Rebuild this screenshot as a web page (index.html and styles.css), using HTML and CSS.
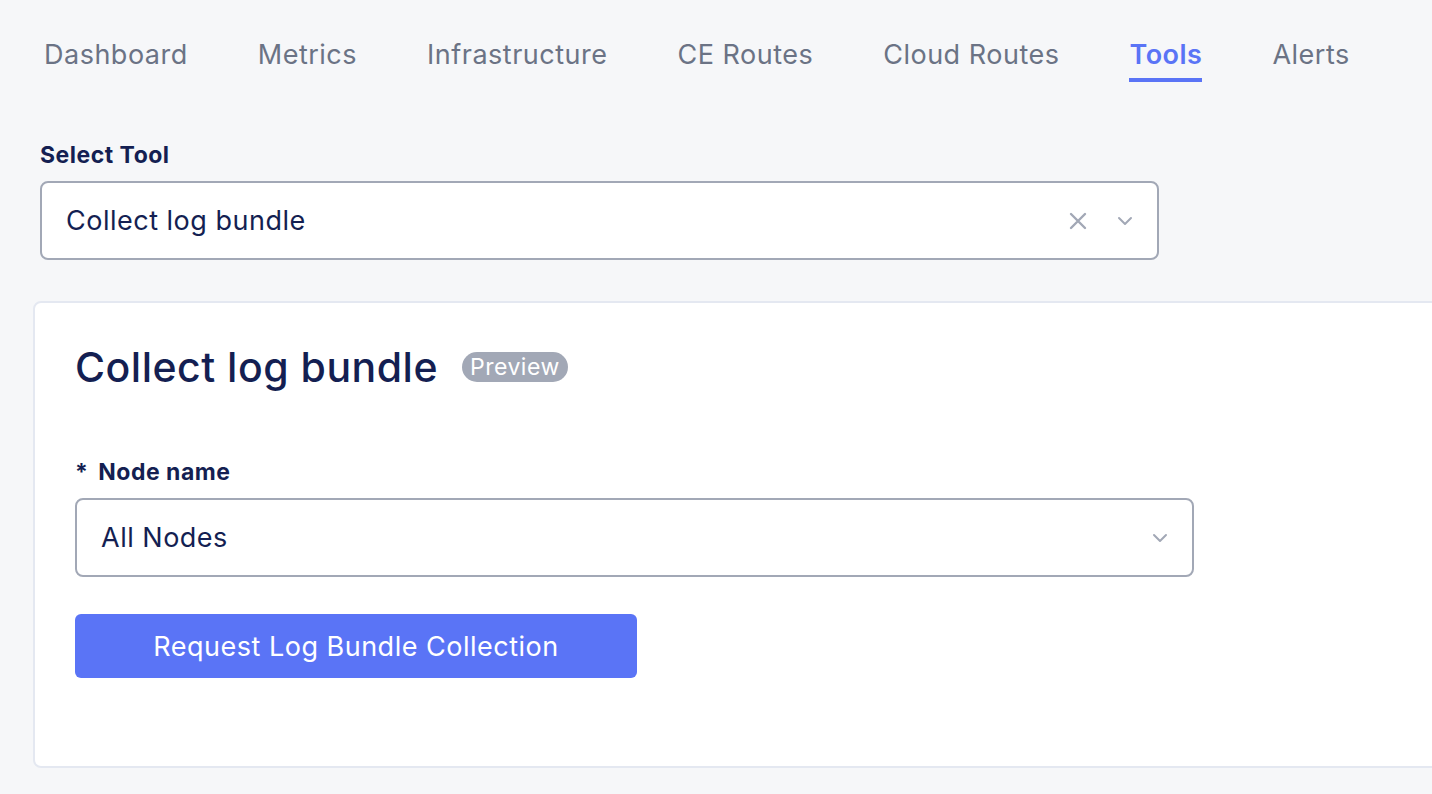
FILE: index.html
```html
<!DOCTYPE html>
<html lang="en">
<head>
    <meta charset="UTF-8">
    <meta name="viewport" content="width=device-width, initial-scale=1.0">
    <title>Tools</title>
    <link rel="stylesheet" href="styles.css">
</head>
<body>
    <div class="page">
        <nav class="tabs">
            <a class="tab">Dashboard</a>
            <a class="tab">Metrics</a>
            <a class="tab">Infrastructure</a>
            <a class="tab">CE Routes</a>
            <a class="tab">Cloud Routes</a>
            <a class="tab active">Tools</a>
            <a class="tab">Alerts</a>
        </nav>

        <div class="tool-picker">
            <label class="field-label">Select Tool</label>
            <div class="select">
                <span class="select-value">Collect log bundle</span>
                <span class="select-icons">
                    <!-- clear -->
                    <svg class="icon-clear" width="18" height="18" viewBox="0 0 18 18">
                        <path d="M2 2 L16 16 M16 2 L2 16" stroke="currentColor" stroke-width="2.4" stroke-linecap="round"/>
                    </svg>
                    <!-- dropdown -->
                    <svg class="icon-chevron" width="16" height="10" viewBox="0 0 16 10">
                        <path d="M2 2 L8 8 L14 2" stroke="currentColor" stroke-width="2" fill="none" stroke-linecap="round" stroke-linejoin="round"/>
                    </svg>
                </span>
            </div>
        </div>

        <div class="card">
            <div class="card-title">
                <h2>Collect log bundle</h2>
                <span class="badge">Preview</span>
            </div>

            <label class="field-label"><span class="required">*</span> Node name</label>
            <div class="select node-select">
                <span class="select-value">All Nodes</span>
                <span class="select-icons">
                    <svg class="icon-chevron" width="16" height="10" viewBox="0 0 16 10">
                        <path d="M2 2 L8 8 L14 2" stroke="currentColor" stroke-width="2" fill="none" stroke-linecap="round" stroke-linejoin="round"/>
                    </svg>
                </span>
            </div>

            <button class="primary">Request Log Bundle Collection</button>
        </div>
    </div>
</body>
</html>
```

FILE: styles.css
```css
html, body {
    margin: 0;
    background-color: #f6f7f9;
    overflow: hidden;
}
.page {
    font-family: Inter, "Noto Sans", sans-serif;
    color: #141f52;
    letter-spacing: 0.5px;
    padding-left: 40px;
}
.tabs {
    display: flex;
    gap: 70px;
    padding: 37px 0 0 4px;
}
.tab {
    font-size: 27px;
    line-height: 36px;
    color: #6b7385;
    padding-bottom: 5px;
    border-bottom: 4px solid transparent;
}
.tab.active {
    color: #5a74f6;
    font-weight: 600;
    border-bottom-color: #5a74f6;
}
.tool-picker {
    margin-top: 59px;
    width: 1119px;
}
.field-label {
    display: block;
    font-size: 23px;
    font-weight: 700;
    line-height: 28px;
    margin-bottom: 12px;
}
.required {
    margin-right: 4px;
}
.select {
    box-sizing: border-box;
    display: flex;
    align-items: center;
    justify-content: space-between;
    height: 79px;
    border: 2px solid #a2a8b6;
    border-radius: 8px;
    background-color: #fff;
    padding: 0 24px;
}
.select-value {
    font-size: 27px;
}
.select-icons {
    display: flex;
    align-items: center;
    gap: 30px;
    color: #a2a8b6;
}
.card {
    margin: 41px -40px 0 -7px;
    background-color: #fff;
    border: 2px solid #e4e8f1;
    border-radius: 8px;
    padding: 38px 40px 88px 40px;
}
.card-title {
    display: flex;
    align-items: center;
    gap: 24px;
    margin-bottom: 65px;
}
.card-title h2 {
    margin: 0;
    font-size: 41px;
    font-weight: 500;
    line-height: 52px;
}
.badge {
    background-color: #a2a8b6;
    color: #fff;
    font-size: 23px;
    line-height: 30px;
    padding: 0 8px;
    border-radius: 16px;
}
.node-select {
    width: 1119px;
    margin-bottom: 37px;
}
button.primary {
    font-family: inherit;
    font-size: 27px;
    letter-spacing: 0.5px;
    color: #fff;
    background-color: #5a74f6;
    border: none;
    border-radius: 6px;
    width: 562px;
    height: 64px;
    cursor: pointer;
}
```
